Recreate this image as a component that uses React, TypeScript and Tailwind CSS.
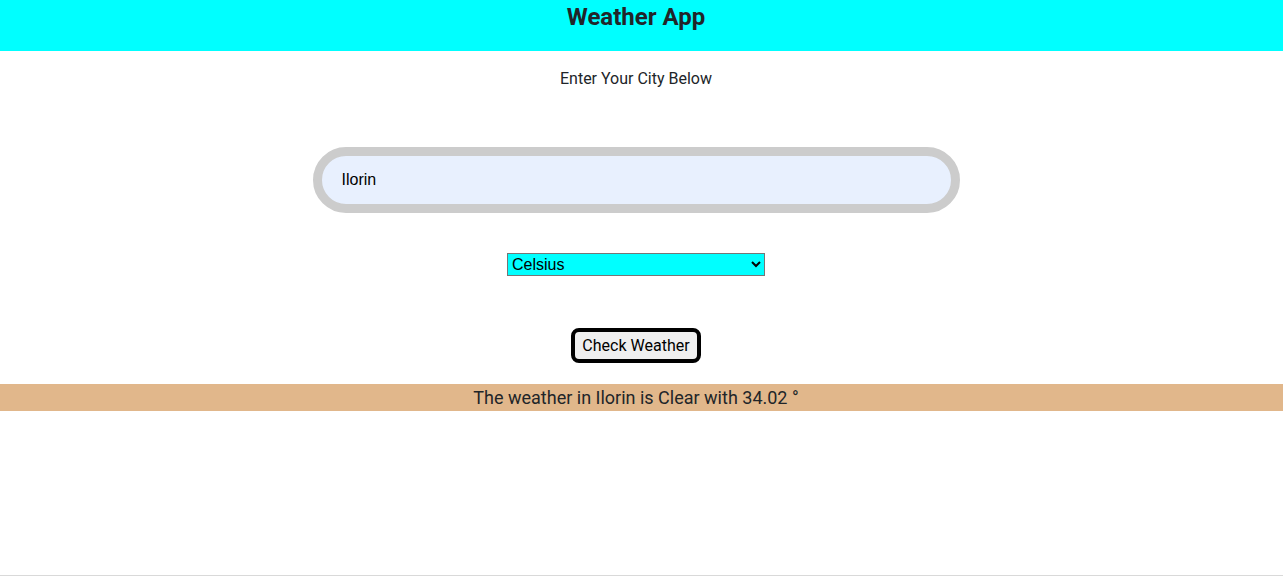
import React from 'react';

export default function App() {
  return (
    <div className="min-h-[576px] flex flex-col bg-white font-['Roboto',sans-serif] text-[#212529]">
      <header className="h-[51px] bg-[#00ffff] flex justify-center pr-[11px]">
        <h1 className="text-2xl font-bold leading-[34px]">Weather App</h1>
      </header>

      <p className="text-center text-base leading-6 mt-[16px] pr-[11px]">Enter Your City Below</p>

      <div className="flex justify-center mt-[56px] pr-[11px]">
        <input
          defaultValue="Ilorin"
          className="w-[647px] h-[66px] rounded-full border-[9px] border-[#cccccc] bg-[#e8f0fe] px-5 text-base text-black font-['Liberation_Sans',Arial,sans-serif] outline-none"
        />
      </div>

      <div className="flex justify-center mt-[40px] pr-[11px]">
        <select className="w-[258px] h-[23px] border border-[#767676] bg-[#00ffff] text-base text-black font-['Liberation_Sans',Arial,sans-serif]">
          <option>Celsius</option>
          <option>Fahrenheit</option>
        </select>
      </div>

      <div className="flex justify-center mt-[52px] pr-[11px]">
        <button className="w-[130px] h-[35px] border-4 border-black rounded-lg bg-[#efefef] text-base text-black">
          Check Weather
        </button>
      </div>

      <div className="mt-[21px] h-[27px] bg-[#e1b78b] text-center text-lg leading-[27px] pr-[11px]">
        The weather in Ilorin is Clear with 34.02 °
      </div>

      <div className="flex-1 border-b border-[#d9d9d9]" />
    </div>
  );
}
